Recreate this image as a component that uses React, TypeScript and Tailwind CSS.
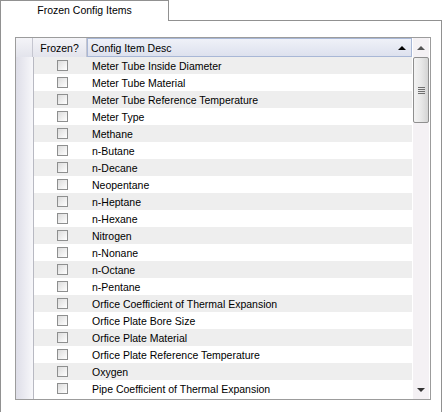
import React from "react";

const items = [
  "Meter Tube Inside Diameter",
  "Meter Tube Material",
  "Meter Tube Reference Temperature",
  "Meter Type",
  "Methane",
  "n-Butane",
  "n-Decane",
  "Neopentane",
  "n-Heptane",
  "n-Hexane",
  "Nitrogen",
  "n-Nonane",
  "n-Octane",
  "n-Pentane",
  "Orfice Coefficient of Thermal Expansion",
  "Orfice Plate Bore Size",
  "Orfice Plate Material",
  "Orfice Plate Reference Temperature",
  "Oxygen",
  "Pipe Coefficient of Thermal Expansion",
];

function CheckBox() {
  return (
    <div className="w-[11px] h-[11px] border border-[#8e8f8f] bg-gradient-to-br from-[#dcdcdc] to-[#ffffff]" />
  );
}

export default function App() {
  return (
    <div
      className="w-[444px] h-[412px] bg-white overflow-hidden text-[10.5px] text-black leading-none"
      style={{ fontFamily: '"Liberation Sans", Arial, sans-serif' }}
    >
      <div className="w-[442px] h-[412px] flex flex-col">
        {/* Tab strip */}
        <div className="flex h-[21px] shrink-0">
          <div className="w-[169px] h-[21px] border-l border-t border-r border-[#919191] flex items-center justify-center pb-[1px]">
            Frozen Config Items
          </div>
          <div className="flex-1 h-[21px] border-b border-[#919191]" />
        </div>
        {/* Panel */}
        <div className="flex-1 border-l border-r border-[#919191] pl-[14px] pt-[16px]">
          {/* Grid */}
          <div className="w-[416px] h-[363px] border border-[#9c9c9c] flex">
            <div className="w-[396px] flex flex-col">
              {/* Header */}
              <div className="flex h-[19px] shrink-0">
                <div className="w-[17px] h-full bg-gradient-to-b from-[#f4f4f8] to-[#e3e4ec] border-r border-[#c5c6d0]" />
                <div className="w-[54px] h-full bg-gradient-to-b from-[#f4f4f8] to-[#e3e4ec] border-r border-[#c5c6d0] flex items-center justify-center pt-[2px]">
                  Frozen?
                </div>
                <div className="flex-1 h-full bg-gradient-to-b from-[#eff1f8] to-[#dde1ee] border border-[#a8b7d6] flex items-center pl-[3px] pr-[5px]">
                  <span className="flex-1 pt-[2px]">Config Item Desc</span>
                  <span className="w-0 h-0 border-l-[4px] border-r-[4px] border-b-[4px] border-l-transparent border-r-transparent border-b-black" />
                </div>
              </div>
              {/* Rows */}
              <div className="flex flex-1">
                <div className="w-[18px] h-full bg-gradient-to-r from-[#dedee8] to-[#f7f7fa] border-r border-[#b8b9c2]" />
                <div className="flex-1 flex flex-col">
                  {items.map((t, i) => (
                    <div
                      key={t}
                      className={
                        "flex h-[17px] items-center " +
                        (i % 2 === 0 ? "bg-[#eeeeee]" : "bg-white")
                      }
                    >
                      <div className="w-[54px] h-full flex items-center justify-center pl-[2px]">
                        <CheckBox />
                      </div>
                      <div className="flex-1 pl-[4px] pt-[2px] whitespace-nowrap overflow-hidden">{t}</div>
                    </div>
                  ))}
                </div>
              </div>
            </div>
            {/* Scrollbar */}
            <div className="w-[18px] h-full pl-[1px] pr-[1px]">
              <div className="w-[16px] h-full bg-[#f4f1f4] flex flex-col items-center">
                <div className="h-[18px] w-full flex items-center justify-center pt-[2px]">
                  <span className="w-0 h-0 border-l-[4px] border-r-[4px] border-b-[4px] border-l-transparent border-r-transparent border-b-[#555]" />
                </div>
                <div className="w-[16px] h-[66px] mt-[1px] rounded-[2px] border border-[#8f8f8f] bg-gradient-to-r from-[#f3f3f3] via-[#e8e8e8] to-[#d4d4d4] flex flex-col items-center justify-center gap-[1px]">
                  <div className="w-[7px] h-[1px] bg-[#6f6f6f]" />
                  <div className="w-[7px] h-[1px] bg-[#6f6f6f]" />
                  <div className="w-[7px] h-[1px] bg-[#6f6f6f]" />
                  <div className="w-[7px] h-[1px] bg-[#6f6f6f]" />
                </div>
                <div className="flex-1" />
                <div className="h-[16px] w-full flex items-center justify-center pb-[3px]">
                  <span className="w-0 h-0 border-l-[4px] border-r-[4px] border-t-[4px] border-l-transparent border-r-transparent border-t-[#333]" />
                </div>
              </div>
            </div>
          </div>
        </div>
      </div>
    </div>
  );
}
